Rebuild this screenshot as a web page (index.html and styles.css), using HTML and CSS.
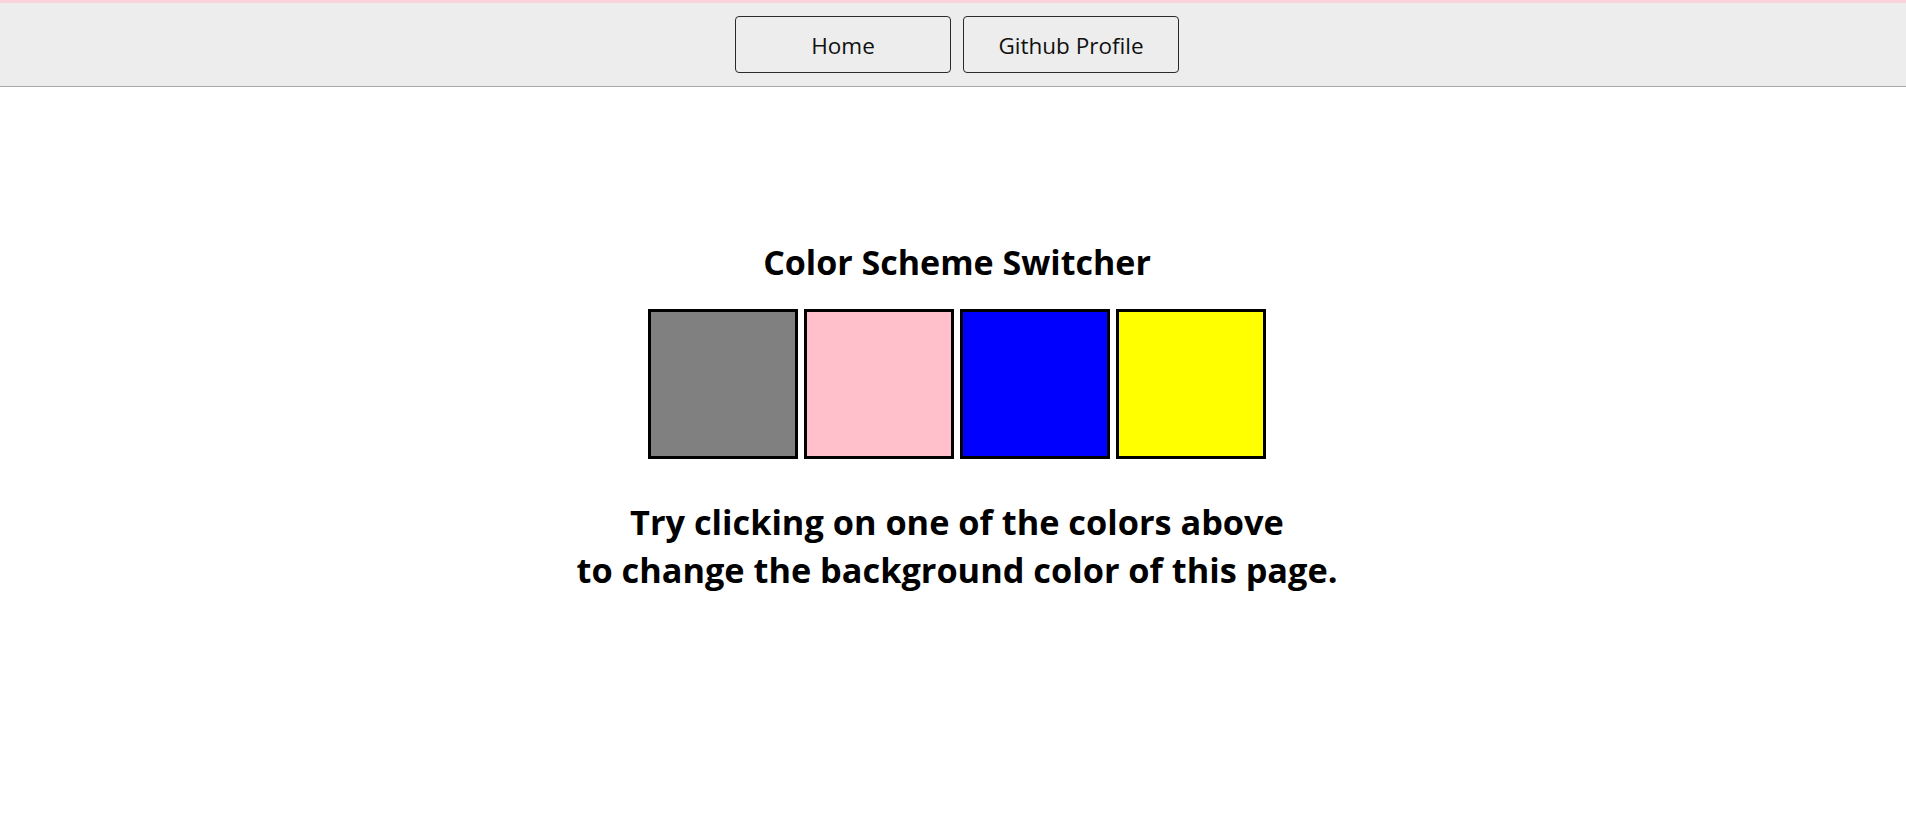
FILE: index.html
```html
<!DOCTYPE html>
<html lang="en">
<head>
<meta charset="utf-8">
<title>Color Scheme Switcher</title>
<link rel="stylesheet" href="styles.css">
</head>
<body>
<nav class="topnav">
  <button class="navbtn">Home</button>
  <button class="navbtn">Github Profile</button>
</nav>
<main class="content">
  <h2 class="title">Color Scheme Switcher</h2>
  <div class="swatches">
    <span class="swatch grey"></span>
    <span class="swatch pink"></span>
    <span class="swatch blue"></span>
    <span class="swatch yellow"></span>
  </div>
  <p class="hint">Try clicking on one of the colors above<br>to change the background color of this page.</p>
</main>
</body>
</html>
```
FILE: styles.css
```css
html, body {
  margin: 0;
  padding: 0;
  background: #ffffff;
  font-family: "Open Sans", "Noto Sans", sans-serif;
  color: #000;
}
.topnav {
  display: flex;
  justify-content: center;
  gap: 12px;
  padding: 13px 0 13px 8px;
  background: #ededed;
  border-top: 3px solid #fbd3da;
  border-bottom: 1px solid #a9a9a9;
}
.navbtn {
  box-sizing: border-box;
  width: 216px;
  height: 57px;
  padding: 2px 0 0;
  background: #ededed;
  border: 1px solid #2a2a2a;
  border-radius: 4px;
  font-family: inherit;
  font-size: 22.5px;
  color: #111;
  cursor: pointer;
}
.content {
  display: flex;
  flex-direction: column;
  align-items: center;
  padding-left: 8px;
  padding-top: 153px;
}
.title {
  margin: 0;
  font-size: 34px;
  font-weight: 700;
  line-height: 44px;
}
.swatches {
  display: flex;
  gap: 6.33px;
  margin-top: 25px;
}
.swatch {
  box-sizing: border-box;
  width: 150px;
  height: 150px;
  border: 3px solid #000;
}
.grey { background: #808080; }
.pink { background: #ffc0cb; }
.blue { background: #0000ff; }
.yellow { background: #ffff00; }
.hint {
  margin: 39px 0 0;
  font-size: 34.3px;
  font-weight: 700;
  line-height: 48px;
  text-align: center;
}
```
